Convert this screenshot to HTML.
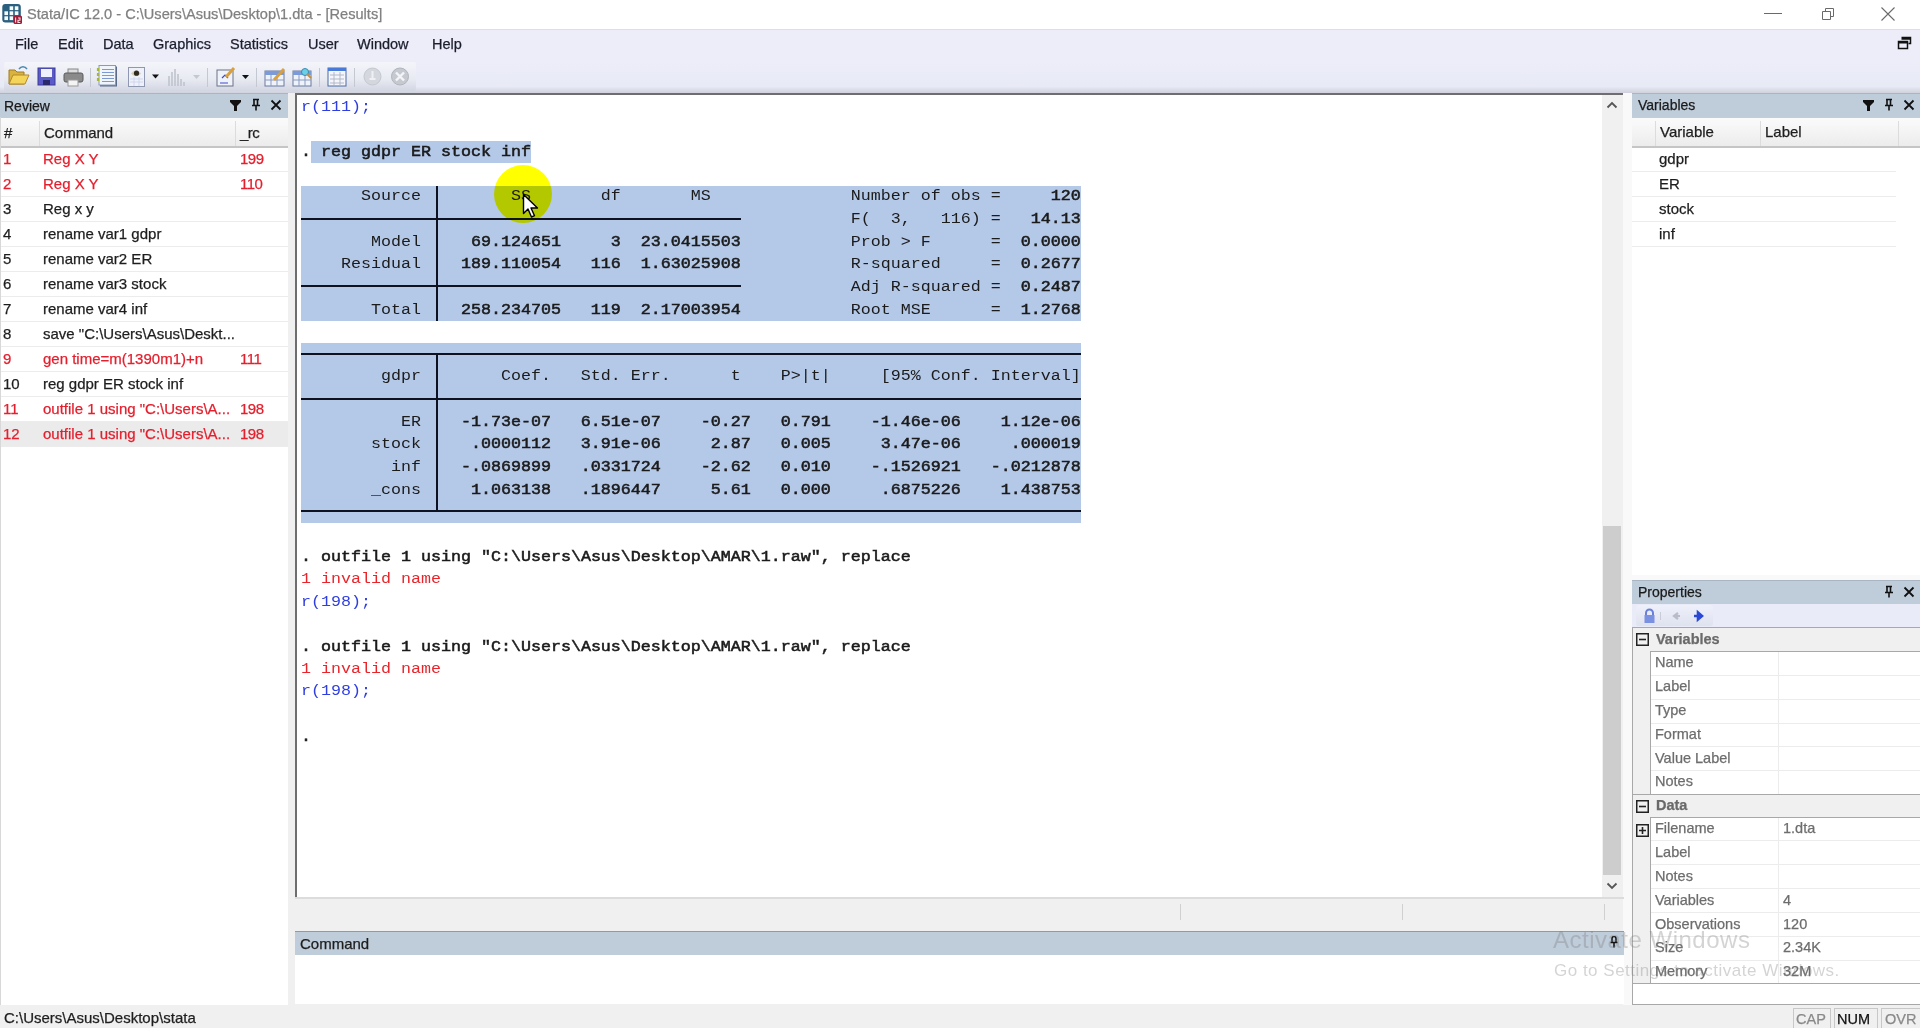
<!DOCTYPE html>
<html><head><meta charset="utf-8">
<style>
*{margin:0;padding:0;box-sizing:border-box}
html,body{width:1920px;height:1028px;overflow:hidden;background:#f0f0f0;font-family:"Liberation Sans",sans-serif;position:relative}
.a{position:absolute}
.t{position:absolute;white-space:pre;line-height:1;-webkit-text-stroke:0.25px currentColor}
#title{left:0;top:0;width:1920px;height:29px;background:#fff}
#menu{left:0;top:29px;width:1920px;height:31px;background:#ecedf9;border-top:1px solid #dcdeea}
#tool{left:0;top:60px;width:1920px;height:33px;background:linear-gradient(#ecedf9 0%,#e8eaf5 80%,#cfd2dc 100%)}
.ph{position:absolute;height:24px;background:#bfccda;border-top:1px solid #a9b5c3;color:#1a1a1a;font-size:15px}
.ch{position:absolute;height:29px;background:linear-gradient(#fbfbfb,#ececec);border-bottom:2px solid #c5c5c5}
.mono{font-family:"Liberation Mono",monospace;font-size:16.67px}
.res{position:absolute;left:301px;white-space:pre;font-family:"Liberation Mono",monospace;font-size:16.67px;line-height:22.5px;color:#1b1b1b}
.b{font-weight:normal;-webkit-text-stroke:0.6px #1b1b1b}
.red{color:#e8252b}
.blue{color:#2f3ee0}
.row{position:absolute;left:0;width:288px;height:25px;border-bottom:1px solid #ececec;font-size:15px}
</style></head><body>
<div id="title" class="a"></div>
<div id="menu" class="a"></div>
<div id="tool" class="a"></div>


<!-- title -->
<svg class="a" style="left:2px;top:3px" width="22" height="22" viewBox="0 0 22 22">
<rect x="0.3" y="1" width="18.5" height="18.5" rx="3" fill="#2a5f7e"/>
<g fill="#f4fbff"><rect x="7.6" y="3.3" width="3.6" height="3.8"/><rect x="12.8" y="3.3" width="3.6" height="3.8"/>
<rect x="2.4" y="8.3" width="3.6" height="3.8"/><rect x="7.6" y="8.3" width="3.6" height="3.8"/><rect x="12.8" y="8.3" width="3.6" height="3.8"/>
<rect x="2.4" y="13.3" width="3.6" height="3.8"/><rect x="7.6" y="13.3" width="3.6" height="3.8"/></g>
<rect x="11.5" y="12.5" width="8.5" height="8.5" rx="1.5" fill="#9e1d36"/>
<path d="M13.6 14.5v5M16 15h2v2.2h-2v2.3h2.3" stroke="#ffd8e0" stroke-width="1.1" fill="none"/>
</svg>
<div class="t" style="left:27px;top:7px;font-size:14.6px;color:#808080">Stata/IC 12.0 - C:\Users\Asus\Desktop\1.dta - [Results]</div>
<div class="a" style="left:1764px;top:13px;width:18px;height:1px;background:#6a6a6a"></div>
<svg class="a" style="left:1820px;top:6px" width="16" height="16" viewBox="0 0 16 16"><path d="M2.5 5.5h8v8h-8z M5.5 5.5v-3h8v8h-3" fill="none" stroke="#6a6a6a" stroke-width="1"/></svg>
<svg class="a" style="left:1880px;top:6px" width="16" height="16" viewBox="0 0 16 16"><path d="M1.5 1.5l13 13M14.5 1.5l-13 13" fill="none" stroke="#6a6a6a" stroke-width="1.1"/></svg>
<!-- menu -->
<div class="t" style="left:15px;top:37px;font-size:14.5px;color:#1c1e2e">File</div>
<div class="t" style="left:58px;top:37px;font-size:14.5px;color:#1c1e2e">Edit</div>
<div class="t" style="left:103px;top:37px;font-size:14.5px;color:#1c1e2e">Data</div>
<div class="t" style="left:153px;top:37px;font-size:14.5px;color:#1c1e2e">Graphics</div>
<div class="t" style="left:230px;top:37px;font-size:14.5px;color:#1c1e2e">Statistics</div>
<div class="t" style="left:308px;top:37px;font-size:14.5px;color:#1c1e2e">User</div>
<div class="t" style="left:357px;top:37px;font-size:14.5px;color:#1c1e2e">Window</div>
<div class="t" style="left:432px;top:37px;font-size:14.5px;color:#1c1e2e">Help</div>
<svg class="a" style="left:1897px;top:36px" width="16" height="14" viewBox="0 0 16 14"><path d="M4.5 1.5h9v6h-2 M4.5 3h9" fill="none" stroke="#111" stroke-width="1.5"/><rect x="1.5" y="5.5" width="9" height="7" fill="none" stroke="#111" stroke-width="1.5"/><rect x="1.5" y="5.5" width="9" height="2" fill="#111"/></svg>


<!-- toolbar -->
<div class="a" style="left:4px;top:62px;width:412px;height:29px;border-radius:2px;background:linear-gradient(#f4f5fa 0%,#e8eaf2 60%,#d2d6e2 100%)"></div>
<svg class="a" style="left:0;top:60px" width="420" height="32" viewBox="0 0 420 32">
<!-- open -->
<path d="M9 10h6l2 2h7v12H9z" fill="#d9b240" stroke="#a07a20" stroke-width="1"/>
<path d="M9 24l4-9h16l-4 9z" fill="#f5d45a" stroke="#b08a28" stroke-width="1"/>
<path d="M19 9c2-3 6-3 8 0" fill="none" stroke="#4a8ab0" stroke-width="1.5"/>
<!-- save -->
<rect x="38" y="8" width="17" height="17" fill="#5a5ac8" stroke="#3a3a98"/>
<rect x="41" y="9" width="11" height="8" fill="#eef0ff"/>
<rect x="43" y="20" width="7" height="5" fill="#2a2a6a"/>
<!-- print -->
<rect x="68" y="9" width="10" height="5" fill="#ddd" stroke="#888"/>
<rect x="64" y="13" width="19" height="9" rx="2" fill="#8a8a8a" stroke="#5a5a5a"/>
<rect x="68" y="20" width="10" height="6" fill="#f4f4f4" stroke="#999"/>
<rect x="90" y="8" width="1" height="19" fill="#c4c8d0"/>
<!-- log -->
<rect x="100" y="6.5" width="17" height="20" fill="#5a6a88"/>
<rect x="99" y="5.5" width="16.5" height="19.5" fill="#f0f4fb" stroke="#8a9ab8" stroke-width="1"/>
<path d="M102 9.5h12M102 12.5h12M102 15.5h12M102 18.5h12M102 21.5h12" stroke="#7c9ad0" stroke-width="1.2"/>
<path d="M98 8v3M98 13v3M98 18v3" stroke="#a8b830" stroke-width="2.2"/>
<!-- viewer -->
<rect x="128.5" y="7.5" width="16" height="19" fill="#eef0fa" stroke="#8f98b0" stroke-width="1"/>
<path d="M130 19h13M130 22h13M134 17v9M139 17v9" stroke="#c8d0ec" stroke-width="0.8"/>
<path d="M131 13.5c3-4 7-4 10 0c-3 3.5-7 3.5-10 0z" fill="#d8cfb8"/>
<circle cx="136.5" cy="13.2" r="2.6" fill="#2e2a20"/>
<path d="M152 14.5h7l-3.5 4z" fill="#111"/>
<!-- graph disabled -->
<path d="M169 26V16M172 26V12M175 26V9M178 26V14M181 26V19M184 26V22" stroke="#c0c4cc" stroke-width="1.6"/>
<path d="M193 15h7l-3.5 4z" fill="#c4c8d0"/>
<rect x="207" y="8" width="1" height="19" fill="#c4c8d0"/>
<!-- do-file -->
<rect x="217" y="10" width="16" height="16" fill="#f0f2fa" stroke="#6a7288"/>
<path d="M220 23h8M222 18l3-3 3 3" stroke="#3a4ac8" stroke-width="1.2" fill="none"/>
<path d="M226 17l8-9" stroke="#d8a040" stroke-width="3"/>
<path d="M242 15h7l-3.5 4z" fill="#111"/>
<rect x="256" y="8" width="1" height="19" fill="#c4c8d0"/>
<!-- data editor -->
<rect x="265" y="11" width="19" height="15" fill="#eef2fa" stroke="#6a7aa0"/>
<rect x="265" y="11" width="19" height="4" fill="#7a9ad8"/>
<path d="M265 20h19M271 15v11M277 15v11" stroke="#8a9ac0" stroke-width="1"/>
<path d="M274 20l10-11" stroke="#d8a040" stroke-width="3"/>
<!-- data browser -->
<rect x="293" y="11" width="18" height="15" fill="#eef2fa" stroke="#6a7aa0"/>
<rect x="293" y="11" width="18" height="4" fill="#7a9ad8"/>
<path d="M293 20h18M299 15v11M305 15v11" stroke="#8a9ac0" stroke-width="1"/>
<circle cx="305" cy="12" r="3.5" fill="#6ad0e8" stroke="#3a8ab0"/>
<path d="M307 14l4 4" stroke="#c09040" stroke-width="2"/>
<rect x="319" y="8" width="1" height="19" fill="#c4c8d0"/>
<!-- var manager -->
<rect x="328" y="8" width="18" height="18" fill="#f4f6fb" stroke="#4a6aa8"/>
<rect x="328" y="8" width="18" height="3" fill="#4a7ad8"/>
<path d="M330 15h14M330 19h14M330 23h14M334 12v13M340 12v13" stroke="#b0b8c8" stroke-width="1"/>
<rect x="354" y="8" width="1" height="19" fill="#c4c8d0"/>
<!-- break disabled -->
<circle cx="372.5" cy="16.5" r="8.5" fill="#d4d8de" stroke="#c4c8ce"/>
<path d="M372.5 11v8M369.5 19h6" stroke="#eef0f4" stroke-width="2"/>
<!-- clear disabled -->
<circle cx="400" cy="16.5" r="8.5" fill="#c6cad0" stroke="#b0b4bb"/>
<path d="M396 12.5l8 8M404 12.5l-8 8" stroke="#f4f5f8" stroke-width="2.4"/>
</svg>

<!-- Review panel -->
<div class="a" style="left:0;top:93px;width:288px;height:912px;background:#fff"></div>
<div class="ph" style="left:0;top:93px;width:288px;height:25px"></div>
<div class="ch" style="left:0;top:118px;width:288px;height:30px"></div>


<div class="t" style="left:4px;top:99px;font-size:14px;color:#1a1a1a">Review</div>
<svg class="a" style="left:229px;top:99px" width="14" height="13" viewBox="0 0 14 13"><path d="M1 1h11v2L8 7v5H5V7L1 3z" fill="#111"/></svg>
<svg class="a" style="left:250px;top:98px" width="12" height="14" viewBox="0 0 12 14"><path d="M3 1.5h6M4 1.5v6M7.5 1.5v6M2 7.5h8M6 7.5v5" stroke="#111" stroke-width="1.6" fill="none"/></svg>
<svg class="a" style="left:270px;top:99px" width="12" height="12" viewBox="0 0 12 12"><path d="M1.5 1.5l9 9M10.5 1.5l-9 9" stroke="#111" stroke-width="1.8"/></svg>
<div class="a" style="left:39px;top:121px;width:1px;height:25px;background:#dcdcdc"></div>
<div class="a" style="left:235px;top:121px;width:1px;height:25px;background:#dcdcdc"></div>
<div class="t" style="left:4px;top:125px;font-size:15px;color:#1e1e1e">#</div>
<div class="t" style="left:44px;top:125px;font-size:15px;color:#1e1e1e">Command</div>
<div class="t" style="left:240px;letter-spacing:-0.5px;top:125.0px;font-size:15px;color:#1e1e1e">_rc</div>
<div class="a" style="left:0;top:421px;width:288px;height:26px;background:#ebebeb"></div>
<div class="a" style="left:0;top:171px;width:288px;height:1px;background:#ececec"></div>
<div class="t" style="left:3px;top:151.2px;font-size:15px;color:#e4202e">1</div>
<div class="t" style="left:43px;top:151.2px;font-size:15px;color:#e4202e">Reg X Y</div>
<div class="t" style="left:240px;letter-spacing:-0.5px;top:151.2px;font-size:15px;color:#e4202e">199</div>
<div class="a" style="left:0;top:196px;width:288px;height:1px;background:#ececec"></div>
<div class="t" style="left:3px;top:176.2px;font-size:15px;color:#e4202e">2</div>
<div class="t" style="left:43px;top:176.2px;font-size:15px;color:#e4202e">Reg X Y</div>
<div class="t" style="left:240px;letter-spacing:-0.5px;top:176.2px;font-size:15px;color:#e4202e">110</div>
<div class="a" style="left:0;top:221px;width:288px;height:1px;background:#ececec"></div>
<div class="t" style="left:3px;top:201.2px;font-size:15px;color:#1e1e1e">3</div>
<div class="t" style="left:43px;top:201.2px;font-size:15px;color:#1e1e1e">Reg x y</div>
<div class="a" style="left:0;top:246px;width:288px;height:1px;background:#ececec"></div>
<div class="t" style="left:3px;top:226.2px;font-size:15px;color:#1e1e1e">4</div>
<div class="t" style="left:43px;top:226.2px;font-size:15px;color:#1e1e1e">rename var1 gdpr</div>
<div class="a" style="left:0;top:271px;width:288px;height:1px;background:#ececec"></div>
<div class="t" style="left:3px;top:251.2px;font-size:15px;color:#1e1e1e">5</div>
<div class="t" style="left:43px;top:251.2px;font-size:15px;color:#1e1e1e">rename var2 ER</div>
<div class="a" style="left:0;top:296px;width:288px;height:1px;background:#ececec"></div>
<div class="t" style="left:3px;top:276.2px;font-size:15px;color:#1e1e1e">6</div>
<div class="t" style="left:43px;top:276.2px;font-size:15px;color:#1e1e1e">rename var3 stock</div>
<div class="a" style="left:0;top:321px;width:288px;height:1px;background:#ececec"></div>
<div class="t" style="left:3px;top:301.2px;font-size:15px;color:#1e1e1e">7</div>
<div class="t" style="left:43px;top:301.2px;font-size:15px;color:#1e1e1e">rename var4 inf</div>
<div class="a" style="left:0;top:346px;width:288px;height:1px;background:#ececec"></div>
<div class="t" style="left:3px;top:326.2px;font-size:15px;color:#1e1e1e">8</div>
<div class="t" style="left:43px;top:326.2px;font-size:15px;color:#1e1e1e">save "C:\Users\Asus\Deskt...</div>
<div class="a" style="left:0;top:371px;width:288px;height:1px;background:#ececec"></div>
<div class="t" style="left:3px;top:351.2px;font-size:15px;color:#e4202e">9</div>
<div class="t" style="left:43px;top:351.2px;font-size:15px;color:#e4202e">gen time=m(1390m1)+n</div>
<div class="t" style="left:240px;letter-spacing:-0.5px;top:351.2px;font-size:15px;color:#e4202e">111</div>
<div class="a" style="left:0;top:396px;width:288px;height:1px;background:#ececec"></div>
<div class="t" style="left:3px;top:376.2px;font-size:15px;color:#1e1e1e">10</div>
<div class="t" style="left:43px;top:376.2px;font-size:15px;color:#1e1e1e">reg gdpr ER stock inf</div>
<div class="a" style="left:0;top:421px;width:288px;height:1px;background:#ececec"></div>
<div class="t" style="left:3px;top:401.2px;font-size:15px;color:#e4202e">11</div>
<div class="t" style="left:43px;top:401.2px;font-size:15px;color:#e4202e">outfile 1 using "C:\Users\A...</div>
<div class="t" style="left:240px;letter-spacing:-0.5px;top:401.2px;font-size:15px;color:#e4202e">198</div>
<div class="a" style="left:0;top:446px;width:288px;height:1px;background:#ececec"></div>
<div class="t" style="left:3px;top:426.2px;font-size:15px;color:#e4202e">12</div>
<div class="t" style="left:43px;top:426.2px;font-size:15px;color:#e4202e">outfile 1 using "C:\Users\A...</div>
<div class="t" style="left:240px;letter-spacing:-0.5px;top:426.2px;font-size:15px;color:#e4202e">198</div>

<!-- Results window -->
<div class="a" style="left:295px;top:93px;width:1329px;height:805px;background:#fff;border-left:2px solid #6e6e6e;border-top:2px solid #6e6e6e"></div>


<!-- results content -->
<div class="a" style="left:311px;top:140.5px;width:220px;height:22.5px;background:#b4c8e8"></div>
<div class="a" style="left:301px;top:185.5px;width:780px;height:135px;background:#b4c8e8"></div>
<div class="a" style="left:301px;top:343px;width:780px;height:180px;background:#b4c8e8"></div>
<div class="a" style="left:436px;top:185.5px;width:2px;height:135px;background:#0e1220"></div>
<div class="a" style="left:301px;top:217.5px;width:440px;height:2px;background:#0e1220"></div>
<div class="a" style="left:301px;top:285px;width:440px;height:2px;background:#0e1220"></div>
<div class="a" style="left:301px;top:352.5px;width:780px;height:2px;background:#0e1220"></div>
<div class="a" style="left:301px;top:397.5px;width:780px;height:2px;background:#0e1220"></div>
<div class="a" style="left:301px;top:510px;width:780px;height:2px;background:#0e1220"></div>
<div class="a" style="left:436px;top:352.5px;width:2px;height:159.5px;background:#0e1220"></div>
<pre class="res" style="top:96.33px;line-height:25.862px;transform:scaleY(0.87);transform-origin:0 0"><span class="blue">r(111);</span>

<span class="b">. </span><span class="b">reg gdpr ER stock inf</span>

<span class="n">      Source         SS       df       MS              Number of obs =</span><span class="b">     120</span>
<span class="n">                                                       F(  3,   116) =</span><span class="b">   14.13</span>
<span class="n">       Model  </span><span class="b">   69.124651     3  23.0415503</span><span class="n">           Prob &gt; F      =</span><span class="b">  0.0000</span>
<span class="n">    Residual  </span><span class="b">  189.110054   116  1.63025908</span><span class="n">           R-squared     =</span><span class="b">  0.2677</span>
<span class="n">                                                       Adj R-squared =</span><span class="b">  0.2487</span>
<span class="n">       Total  </span><span class="b">  258.234705   119  2.17003954</span><span class="n">           Root MSE      =</span><span class="b">  1.2768</span>


<span class="n">        gdpr        Coef.   Std. Err.      t    P&gt;|t|     [95% Conf. Interval]</span>

<span class="n">          ER  </span><span class="b">  -1.73e-07   6.51e-07    -0.27   0.791    -1.46e-06    1.12e-06</span>
<span class="n">       stock  </span><span class="b">   .0000112   3.91e-06     2.87   0.005     3.47e-06     .000019</span>
<span class="n">         inf  </span><span class="b">  -.0869899   .0331724    -2.62   0.010    -.1526921   -.0212878</span>
<span class="n">       _cons  </span><span class="b">   1.063138   .1896447     5.61   0.000     .6875226    1.438753</span>


<span class="b">. </span><span class="b">outfile 1 using &quot;C:\Users\Asus\Desktop\AMAR\1.raw&quot;, replace</span>
<span class="red">1 invalid name</span>
<span class="blue">r(198);</span>

<span class="b">. </span><span class="b">outfile 1 using &quot;C:\Users\Asus\Desktop\AMAR\1.raw&quot;, replace</span>
<span class="red">1 invalid name</span>
<span class="blue">r(198);</span>

<span class="b">.</span>
</pre>


<div class="a" style="left:1602px;top:95px;width:21px;height:802px;background:#f0f0f0"></div>
<div class="a" style="left:1603px;top:526px;width:18px;height:349px;background:#cdcdcd"></div>
<svg class="a" style="left:1605px;top:100px" width="14" height="10" viewBox="0 0 14 10"><path d="M2.5 7.5l4.5-4.5 4.5 4.5" fill="none" stroke="#555" stroke-width="1.8"/></svg>
<svg class="a" style="left:1605px;top:881px" width="14" height="10" viewBox="0 0 14 10"><path d="M2.5 2.5l4.5 4.5 4.5-4.5" fill="none" stroke="#555" stroke-width="1.8"/></svg>

<!-- Variables panel -->
<div class="a" style="left:1623px;top:93px;width:297px;height:912px;background:#f9f9f9"></div>
<div class="a" style="left:0;top:117px;width:1px;height:888px;background:#d8d8d8"></div>
<div class="a" style="left:1632px;top:93px;width:288px;height:482px;background:#fff"></div>
<div class="ph" style="left:1632px;top:93px;width:288px;height:25px"></div>
<div class="ch" style="left:1632px;top:118px;width:288px;height:30px"></div>


<div class="t" style="left:1638px;top:98px;font-size:14px;color:#1a1a1a">Variables</div>
<svg class="a" style="left:1862px;top:99px" width="14" height="13" viewBox="0 0 14 13"><path d="M1 1h11v2L8 7v5H5V7L1 3z" fill="#111"/></svg>
<svg class="a" style="left:1883px;top:98px" width="12" height="14" viewBox="0 0 12 14"><path d="M3 1.5h6M4 1.5v6M7.5 1.5v6M2 7.5h8M6 7.5v5" stroke="#111" stroke-width="1.6" fill="none"/></svg>
<svg class="a" style="left:1903px;top:99px" width="12" height="12" viewBox="0 0 12 12"><path d="M1.5 1.5l9 9M10.5 1.5l-9 9" stroke="#111" stroke-width="1.8"/></svg>
<div class="a" style="left:1655px;top:121px;width:1px;height:25px;background:#dcdcdc"></div>
<div class="a" style="left:1760px;top:121px;width:1px;height:25px;background:#dcdcdc"></div>
<div class="a" style="left:1898px;top:121px;width:1px;height:25px;background:#dcdcdc"></div>
<div class="t" style="left:1660px;top:124px;font-size:15px;color:#1e1e1e">Variable</div>
<div class="t" style="left:1765px;top:124px;font-size:15px;color:#1e1e1e">Label</div>
<div class="t" style="left:1659px;top:151.4px;font-size:15px;color:#1e1e1e">gdpr</div>
<div class="a" style="left:1632px;top:171px;width:264px;height:1px;background:#ececec"></div>
<div class="t" style="left:1659px;top:176.4px;font-size:15px;color:#1e1e1e">ER</div>
<div class="a" style="left:1632px;top:196px;width:264px;height:1px;background:#ececec"></div>
<div class="t" style="left:1659px;top:201.4px;font-size:15px;color:#1e1e1e">stock</div>
<div class="a" style="left:1632px;top:221px;width:264px;height:1px;background:#ececec"></div>
<div class="t" style="left:1659px;top:226.4px;font-size:15px;color:#1e1e1e">inf</div>
<div class="a" style="left:1632px;top:246px;width:264px;height:1px;background:#ececec"></div>

<!-- Properties panel -->
<div class="a" style="left:1632px;top:580px;width:288px;height:425px;background:#fff"></div>
<div class="ph" style="left:1632px;top:580px;width:288px"></div>


<div class="t" style="left:1638px;top:585px;font-size:14px;color:#1a1a1a">Properties</div>
<svg class="a" style="left:1883px;top:585px" width="12" height="14" viewBox="0 0 12 14"><path d="M3 1.5h6M4 1.5v6M7.5 1.5v6M2 7.5h8M6 7.5v5" stroke="#111" stroke-width="1.6" fill="none"/></svg>
<svg class="a" style="left:1903px;top:586px" width="12" height="12" viewBox="0 0 12 12"><path d="M1.5 1.5l9 9M10.5 1.5l-9 9" stroke="#111" stroke-width="1.8"/></svg>
<div class="a" style="left:1632px;top:604px;width:288px;height:23px;background:#e9ecf8"></div>
<div class="a" style="left:1636px;top:605px;width:77px;height:21px;border-radius:3px;background:linear-gradient(#eef0fa,#dfe3ef)"></div>
<svg class="a" style="left:1642px;top:607px" width="70" height="18" viewBox="0 0 70 18">
<path d="M4 8V6a3.5 3.5 0 0 1 7 0v2" fill="none" stroke="#6a80d8" stroke-width="2"/>
<rect x="2.5" y="8" width="10" height="8" fill="#7a90e0"/>
<rect x="18" y="5" width="1" height="8" fill="#c8ccd8"/>
<path d="M32 9h6M36 6l-4 3 4 3" stroke="#b8bcc8" stroke-width="2.2" fill="none"/>
<path d="M52 9h7M56 5.5l4 3.5-4 3.5z" stroke="#2a48d8" stroke-width="2.6" fill="#2a48d8"/>
</svg>
<div class="a" style="left:1632px;top:627px;width:288px;height:378px;border:1px solid #a8a8a8;border-right:none;background:#fff"></div>
<div class="a" style="left:1633px;top:628px;width:17px;height:355px;background:#f0f0f0"></div>
<div class="a" style="left:1633px;top:628px;width:287px;height:23px;background:#f0f0f0"></div>
<div class="a" style="left:1633px;top:794px;width:287px;height:23px;background:#f0f0f0;border-top:1px solid #a8a8a8"></div>
<div class="a" style="left:1650px;top:651px;width:270px;height:1px;background:#a8a8a8"></div>
<div class="a" style="left:1650px;top:817px;width:270px;height:1px;background:#a8a8a8"></div>
<div class="a" style="left:1633px;top:983px;width:287px;height:1px;background:#a8a8a8"></div>
<div class="a" style="left:1650px;top:651px;width:1px;height:143px;background:#a8a8a8"></div>
<div class="a" style="left:1650px;top:817px;width:1px;height:166px;background:#a8a8a8"></div>
<div class="a" style="left:1778px;top:652px;width:1px;height:142px;background:#ececec"></div>
<div class="a" style="left:1778px;top:818px;width:1px;height:165px;background:#ececec"></div>
<svg class="a" style="left:1636px;top:633px" width="13" height="13" viewBox="0 0 13 13"><rect x="0.75" y="0.75" width="11.5" height="11.5" fill="none" stroke="#222" stroke-width="1.5"/><path d="M3 6.5h7" stroke="#222" stroke-width="1.6"/></svg>
<div class="t" style="left:1656px;top:631.5px;font-size:14.5px;color:#6a6a6a;font-weight:bold">Variables</div>
<svg class="a" style="left:1636px;top:800px" width="13" height="13" viewBox="0 0 13 13"><rect x="0.75" y="0.75" width="11.5" height="11.5" fill="none" stroke="#222" stroke-width="1.5"/><path d="M3 6.5h7" stroke="#222" stroke-width="1.6"/></svg>
<div class="t" style="left:1656px;top:797.5px;font-size:14.5px;color:#6a6a6a;font-weight:bold">Data</div>
<svg class="a" style="left:1636px;top:824px" width="13" height="13" viewBox="0 0 13 13"><rect x="0.75" y="0.75" width="11.5" height="11.5" fill="none" stroke="#222" stroke-width="1.5"/><path d="M3 6.5h7M6.5 3v7" stroke="#222" stroke-width="1.6"/></svg>
<div class="t" style="left:1655px;top:655.4px;font-size:14.5px;color:#6d6d6d">Name</div>
<div class="a" style="left:1651px;top:675px;width:269px;height:1px;background:#ececec"></div>
<div class="t" style="left:1655px;top:679.2px;font-size:14.5px;color:#6d6d6d">Label</div>
<div class="a" style="left:1651px;top:699px;width:269px;height:1px;background:#ececec"></div>
<div class="t" style="left:1655px;top:703.0px;font-size:14.5px;color:#6d6d6d">Type</div>
<div class="a" style="left:1651px;top:723px;width:269px;height:1px;background:#ececec"></div>
<div class="t" style="left:1655px;top:726.8px;font-size:14.5px;color:#6d6d6d">Format</div>
<div class="a" style="left:1651px;top:746px;width:269px;height:1px;background:#ececec"></div>
<div class="t" style="left:1655px;top:750.6px;font-size:14.5px;color:#6d6d6d">Value Label</div>
<div class="a" style="left:1651px;top:770px;width:269px;height:1px;background:#ececec"></div>
<div class="t" style="left:1655px;top:774.4px;font-size:14.5px;color:#6d6d6d">Notes</div>
<div class="t" style="left:1655px;top:821.4px;font-size:14.5px;color:#6d6d6d">Filename</div>
<div class="t" style="left:1783px;top:821.4px;font-size:14.5px;color:#6d6d6d">1.dta</div>
<div class="a" style="left:1651px;top:840px;width:269px;height:1px;background:#ececec"></div>
<div class="t" style="left:1655px;top:845.2px;font-size:14.5px;color:#6d6d6d">Label</div>
<div class="a" style="left:1651px;top:864px;width:269px;height:1px;background:#ececec"></div>
<div class="t" style="left:1655px;top:869.0px;font-size:14.5px;color:#6d6d6d">Notes</div>
<div class="a" style="left:1651px;top:888px;width:269px;height:1px;background:#ececec"></div>
<div class="t" style="left:1655px;top:892.8px;font-size:14.5px;color:#6d6d6d">Variables</div>
<div class="t" style="left:1783px;top:892.8px;font-size:14.5px;color:#6d6d6d">4</div>
<div class="a" style="left:1651px;top:912px;width:269px;height:1px;background:#ececec"></div>
<div class="t" style="left:1655px;top:916.6px;font-size:14.5px;color:#6d6d6d">Observations</div>
<div class="t" style="left:1783px;top:916.6px;font-size:14.5px;color:#6d6d6d">120</div>
<div class="a" style="left:1651px;top:936px;width:269px;height:1px;background:#ececec"></div>
<div class="t" style="left:1655px;top:940.4px;font-size:14.5px;color:#6d6d6d">Size</div>
<div class="t" style="left:1783px;top:940.4px;font-size:14.5px;color:#6d6d6d">2.34K</div>
<div class="a" style="left:1651px;top:960px;width:269px;height:1px;background:#ececec"></div>
<div class="t" style="left:1655px;top:964.2px;font-size:14.5px;color:#6d6d6d">Memory</div>
<div class="t" style="left:1783px;top:964.2px;font-size:14.5px;color:#6d6d6d">32M</div>

<!-- Command -->
<div class="ph" style="left:295px;top:931px;width:1329px"></div>
<div class="a" style="left:295px;top:955px;width:1329px;height:49px;background:#fff"></div>


<div class="a" style="left:295px;top:931px;width:1329px;height:1px;background:#8e9aa8"></div>
<div class="t" style="left:300px;top:936px;font-size:15px;color:#1e1e1e">Command</div>
<svg class="a" style="left:1610px;top:936px" width="8" height="13" viewBox="0 0 8 13"><path d="M2 6V2.5a2 2 0 0 1 4 0V6M0.5 6.5h7M4 6.5v5" stroke="#111" stroke-width="1.5" fill="none"/></svg>
<div class="a" style="left:1180px;top:904px;width:1px;height:16px;background:#d0d0d0"></div>
<div class="a" style="left:1402px;top:904px;width:1px;height:16px;background:#d0d0d0"></div>
<div class="a" style="left:1604px;top:904px;width:1px;height:16px;background:#d0d0d0"></div>
<div class="a" style="left:295px;top:897px;width:1329px;height:2px;background:#dcdcdc"></div>
<!-- status bar -->
<div class="t" style="left:4px;top:1010px;font-size:15px;color:#1e1e1e">C:\Users\Asus\Desktop\stata</div>
<div class="a" style="left:1793px;top:1008px;width:38px;height:20px;border:1px solid #c8c8c8;border-bottom:none"></div>
<div class="a" style="left:1834px;top:1008px;width:44px;height:20px;border:1px solid #c8c8c8;border-bottom:none"></div>
<div class="a" style="left:1881px;top:1008px;width:39px;height:20px;border:1px solid #c8c8c8;border-bottom:none;border-right:none"></div>
<div class="t" style="left:1796px;top:1012px;font-size:14.5px;color:#8a8a8a">CAP</div>
<div class="t" style="left:1837px;top:1012px;font-size:14.5px;color:#111">NUM</div>
<div class="t" style="left:1885px;top:1012px;font-size:14.5px;color:#8a8a8a">OVR</div>


<!-- cursor highlight -->
<div class="a" style="left:494px;top:165px;width:58px;height:58px;border-radius:50%;background:#ffff00;mix-blend-mode:multiply"></div>
<svg class="a" style="left:522px;top:193px" width="18" height="26" viewBox="0 0 18 26"><path d="M1.5 1.5v19l4.5-4.5 3.5 8 3-1.3-3.5-7.7h6.5z" fill="#fff" stroke="#000" stroke-width="1.4" stroke-linejoin="round"/></svg>
<!-- watermark -->
<div class="t" style="left:1553px;top:928px;font-size:24px;letter-spacing:0.5px;-webkit-text-stroke:0;color:rgba(120,120,120,0.32)">Activate Windows</div>
<div class="t" style="left:1554px;top:962px;font-size:17px;letter-spacing:0.5px;-webkit-text-stroke:0;color:rgba(120,120,120,0.32)">Go to Settings to activate Windows.</div>
</body></html>
